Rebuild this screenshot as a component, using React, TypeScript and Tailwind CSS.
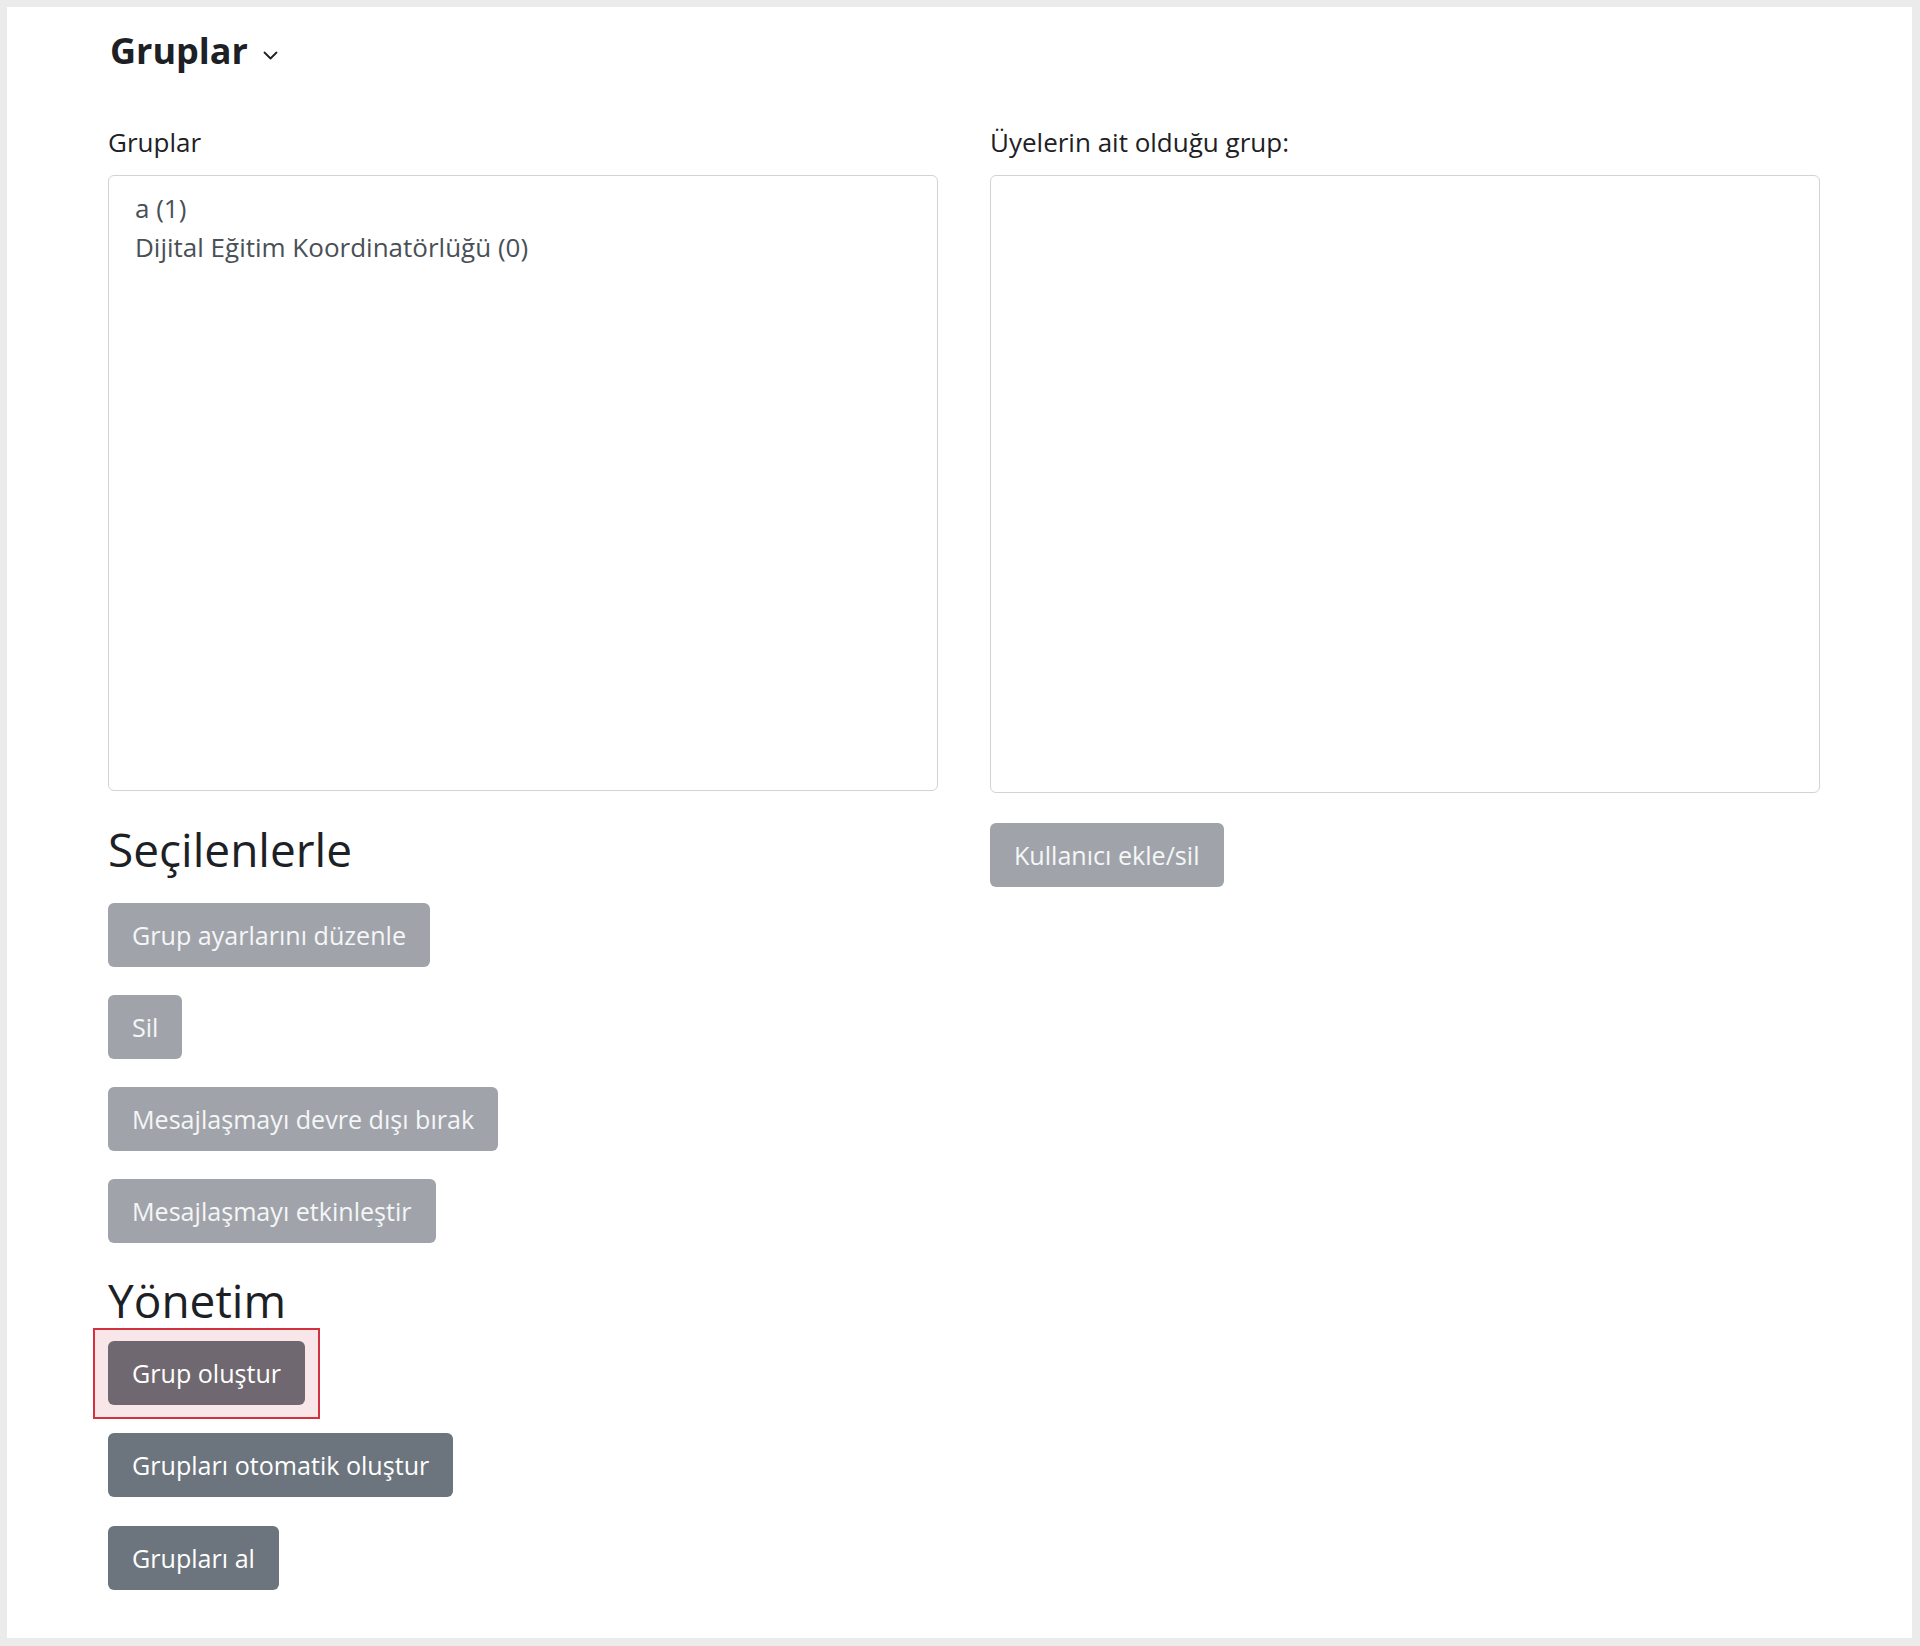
import React from "react";

const font = { fontFamily: '"Open Sans", "Noto Sans", sans-serif' };

function Btn({ label, disabled, extra = "" }: { label: string; disabled?: boolean; extra?: string }) {
  return (
    <button
      type="button"
      className={
        "h-[64px] rounded-[6px] px-[24px] text-[25.1px] leading-[30px] whitespace-nowrap " +
        (disabled ? "bg-[#a0a4aa] text-[#f5f6f7] " : "bg-[#6c757d] text-white ") +
        extra
      }
    >
      {label}
    </button>
  );
}

export default function App() {
  return (
    <div className="min-h-screen bg-[#ebebeb] pt-[7px] pb-[8px] pl-[7px] pr-[8px]" style={font}>
      <div className="h-[1631px] bg-white pl-[101px] pr-[92px] pt-[22px] text-[#1d2125]">
        <div className="flex items-center h-[44px] ml-[2px]">
          <h2 className="text-[36px] leading-[44px] font-bold text-[#1d2125]">Gruplar</h2>
          <svg className="ml-[15px] mt-[8px]" width="15" height="9" viewBox="0 0 15 9" fill="none">
            <path d="M1.5 1.5 L7.5 7.5 L13.5 1.5" stroke="#1d2125" strokeWidth="1.8" strokeLinecap="round" strokeLinejoin="round" />
          </svg>
        </div>

        <div className="mt-[54px] flex gap-[52px]">
          <div className="w-[830px] flex flex-col">
            <label className="text-[26px] leading-[30px]">Gruplar</label>
            <div className="mt-[18px] h-[616px] rounded-[6px] border border-[#ced4da] pl-[26px] pt-[13px] text-[26px] leading-[39px] text-[#495057]">
              <div>a (1)</div>
              <div>Dijital Eğitim Koordinatörlüğü (0)</div>
            </div>
            <h3 className="mt-[31px] text-[46px] leading-[54px] font-normal">Seçilenlerle</h3>
            <div className="flex flex-col items-start">
              <div className="mt-[27px]"><Btn label="Grup ayarlarını düzenle" disabled /></div>
              <div className="mt-[28px]"><Btn label="Sil" disabled /></div>
              <div className="mt-[28px]"><Btn label="Mesajlaşmayı devre dışı bırak" disabled /></div>
              <div className="mt-[28px]"><Btn label="Mesajlaşmayı etkinleştir" disabled /></div>
            </div>
            <h3 className="mt-[30px] text-[46px] leading-[54px] font-normal">Yönetim</h3>
            <div className="flex flex-col items-start">
              <div className="mt-[1px] ml-[-15px] border-2 border-[#d3313f] bg-[#f9e6e8] pl-[13px] pr-[13px] pt-[11px] pb-[12px]">
                <Btn label="Grup oluştur" extra="!bg-[#706870]" />
              </div>
              <div className="mt-[14px]"><Btn label="Grupları otomatik oluştur" /></div>
              <div className="mt-[29px]"><Btn label="Grupları al" /></div>
            </div>
          </div>

          <div className="w-[830px] flex flex-col items-start">
            <label className="text-[26px] leading-[30px]">Üyelerin ait olduğu grup:</label>
            <div className="mt-[18px] h-[618px] w-full rounded-[6px] border border-[#ced4da]" />
            <div className="mt-[30px]"><Btn label="Kullanıcı ekle/sil" disabled /></div>
          </div>
        </div>
      </div>
    </div>
  );
}
